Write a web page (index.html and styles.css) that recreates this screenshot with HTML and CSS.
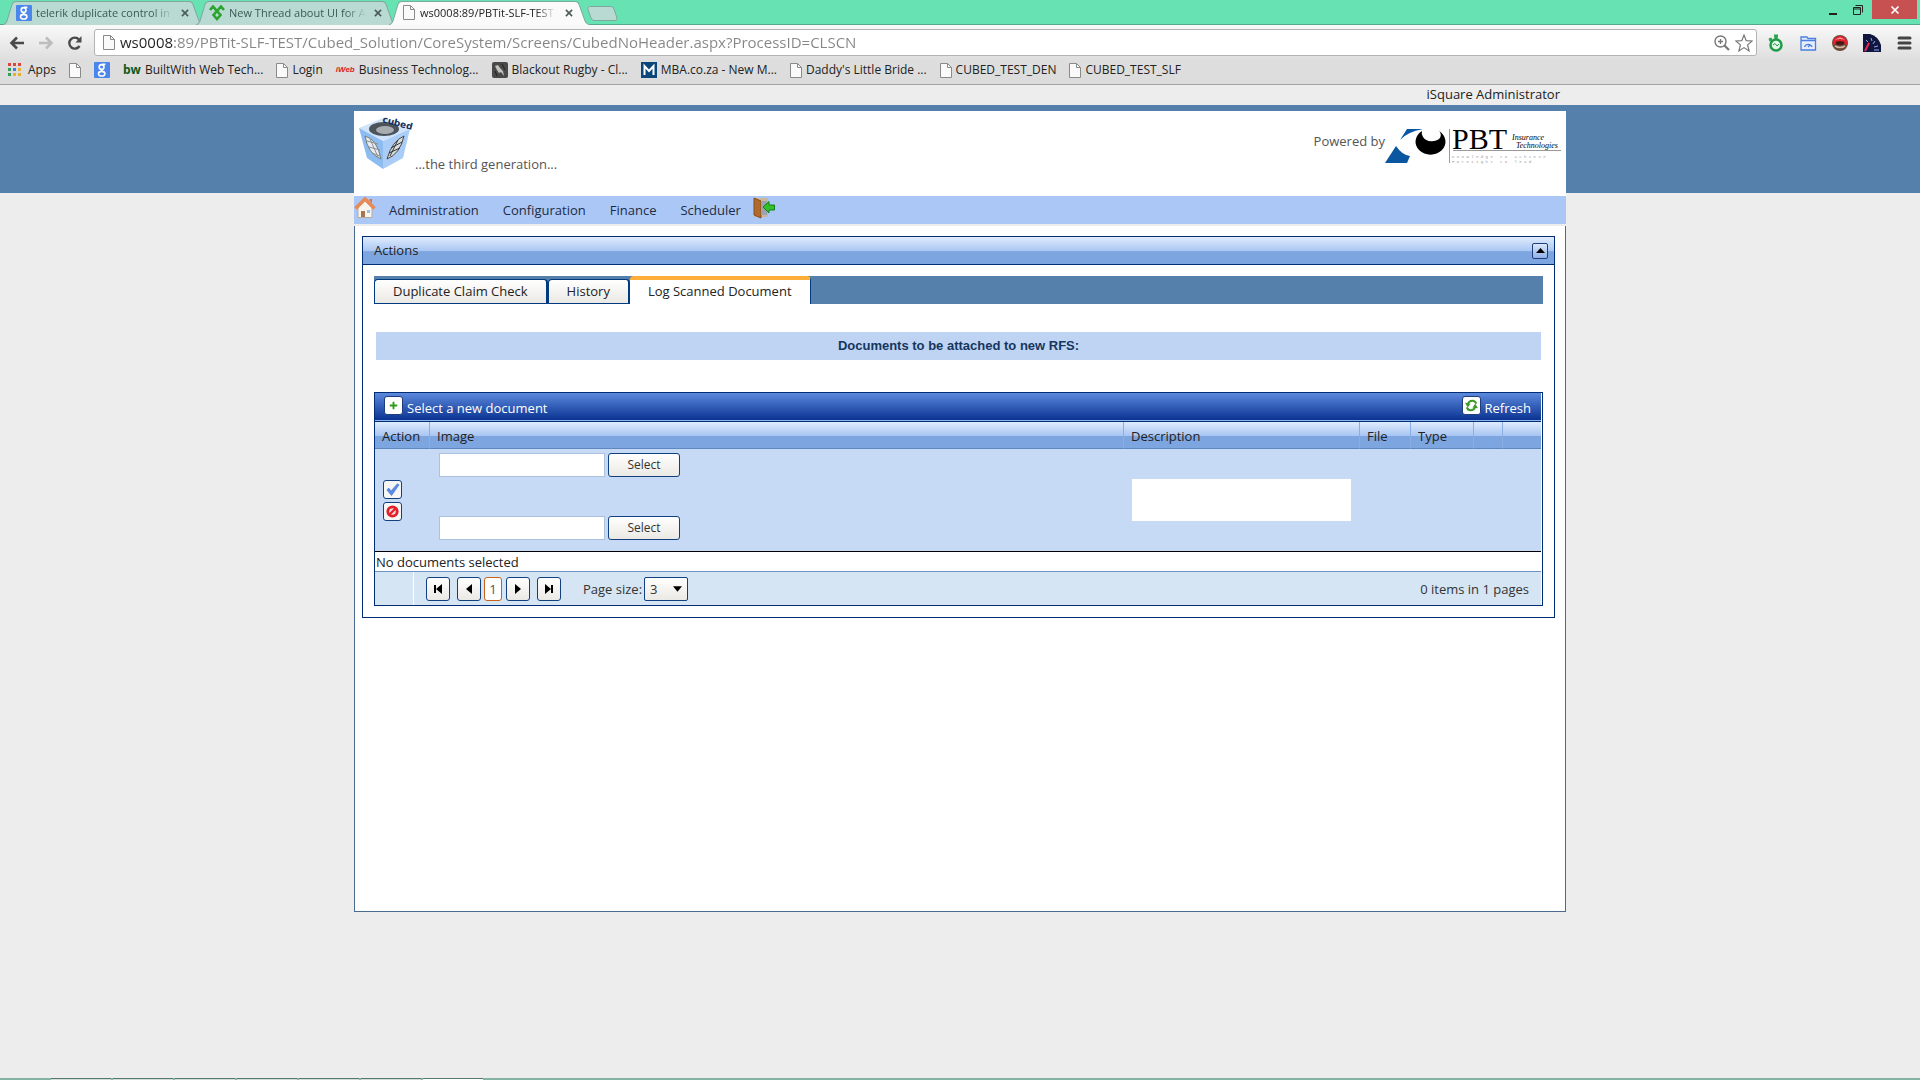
FILE: index.html
```html
<!DOCTYPE html>
<html lang="en">
<head>
<meta charset="utf-8">
<title>Log Scanned Document</title>
<link rel="stylesheet" href="styles.css">
</head>
<body>
<svg class="defs" aria-hidden="true">
  <symbol id="page" viewBox="0 0 12 15"><path d="M.5.5h7l4 4v10H.5z" fill="#fafafa" stroke="#8a8a8a"/><path d="M7.5.5v4h4" fill="none" stroke="#8a8a8a"/></symbol>
  <symbol id="google" viewBox="0 0 16 16"><rect width="16" height="16" rx="1" fill="#4a86ec"/><g fill="none" stroke="#fff" stroke-width="1.6"><circle cx="7.6" cy="5" r="2.4"/><ellipse cx="7.7" cy="11.7" rx="3.2" ry="2.3"/><path d="M8 2.4h3.4M8 7.4q-1.500 1 .8 2"/></g></symbol>
  <symbol id="close" viewBox="0 0 9 9"><path d="M1 1l7 7M8 1L1 8" stroke="currentColor" stroke-width="1.8" fill="none"/></symbol>
</svg>

<header class="browser">
  <div class="tabstrip">
    <div class="tab tab-a"><svg class="shape" preserveAspectRatio="none" viewBox="0 0 200 24"><path d="M0 24Q3 23 4 20L9 4Q10 1.500 13 1.500H185Q188 1.500 189 4L195 20Q196 23 200 24"/></svg>
      <svg class="i16"><use href="#google"/></svg><a href="#">telerik duplicate control in</a><button class="x" aria-label="Close tab"><svg><use href="#close"/></svg></button></div>
    <div class="tab tab-b"><svg class="shape" preserveAspectRatio="none" viewBox="0 0 200 24"><path d="M0 24Q3 23 4 20L9 4Q10 1.500 13 1.500H185Q188 1.500 189 4L195 20Q196 23 200 24"/></svg>
      <svg class="i16" viewBox="0 0 16 16"><path d="M1 5l3-3.500L8 6l4-4.500L15 5M8 6l3.500 4L8 14l-3.500-4z" fill="none" stroke="#2aa42e" stroke-width="2.6"/></svg><a href="#">New Thread about UI for A</a><button class="x" aria-label="Close tab"><svg><use href="#close"/></svg></button></div>
    <div class="tab tab-c current"><svg class="shape" preserveAspectRatio="none" viewBox="0 0 200 24"><path d="M0 24Q3 23 4 20L9 4Q10 1.500 13 1.500H185Q188 1.500 189 4L195 20Q196 23 200 24"/></svg>
      <svg class="ipage"><use href="#page"/></svg><a href="#">ws0008:89/PBTit-SLF-TEST</a><button class="x" aria-label="Close tab"><svg><use href="#close"/></svg></button></div>
    <button class="newtab" aria-label="New tab"><svg viewBox="0 0 31 15"><path d="M2.500.5H24Q26 .5 27 3l3 9q.5 2.500-2 2.500H7Q5 14.500 4 12L.8 3Q.5.5 2.500.5z" fill="#b9d9d3" stroke="#7fa89c"/></svg></button>
    <div class="winbuttons">
      <button aria-label="Minimize"><svg viewBox="0 0 10 10"><path d="M1 8h8v2H1z" fill="#222"/></svg></button>
      <button aria-label="Restore"><svg viewBox="0 0 10 10"><path d="M.5 2.500h7v7h-7zM.5 4h7M2.500.5h7v7" fill="none" stroke="#222"/></svg></button>
      <button class="winclose" aria-label="Close"><svg viewBox="0 0 10 10"><path d="M1.500 1.500l7 7M8.500 1.500l-7 7" stroke="#fff" stroke-width="1.700"/></svg></button>
    </div>
  </div>

  <div class="toolbar">
    <div class="nav">
      <button aria-label="Back"><svg viewBox="0 0 16 14"><path d="M15 7H3M8 1.500L2.500 7 8 12.500" fill="none" stroke="#4a4a4a" stroke-width="2.600"/></svg></button>
      <button aria-label="Forward"><svg viewBox="0 0 16 14"><path d="M1 7h12M8 1.500L13.500 7 8 12.500" fill="none" stroke="#bdbdbd" stroke-width="2.600"/></svg></button>
      <button aria-label="Reload"><svg viewBox="0 0 16 14"><path d="M12.500 10A5.500 5.500 0 1 1 12 3.500" fill="none" stroke="#4a4a4a" stroke-width="2.400"/><path d="M14.500 0v6.500H8.500z" fill="#4a4a4a"/></svg></button>
    </div>
    <div class="urlbox">
      <svg class="ipage"><use href="#page"/></svg>
      <input class="url" aria-label="Address" value="ws0008:89/PBTit-SLF-TEST/Cubed_Solution/CoreSystem/Screens/CubedNoHeader.aspx?ProcessID=CLSCN">
      <svg class="i16" viewBox="0 0 16 16"><circle cx="6.500" cy="6.500" r="5.500" fill="none" stroke="#777" stroke-width="1.400"/><path d="M4 6.500h5M6.500 4v5" stroke="#777" stroke-width="1.300"/><path d="M10.500 10.500l4.500 4.500" stroke="#777" stroke-width="2.200"/></svg>
      <svg class="i18" viewBox="0 0 18 18"><path d="M9 1l2.200 5.600 6 .4-4.600 3.900 1.500 6L9 13.600 3.900 16.900l1.500-6L.8 7l6-.4z" fill="#fff" stroke="#777" stroke-width="1.200"/></svg>
    </div>
    <div class="exts">
      <svg viewBox="0 0 18 18"><path d="M2 6l3-1M7 2h4M9 2v4" stroke="#2aa651" stroke-width="3"/><circle cx="9" cy="11" r="5.500" fill="#e5f6ea" stroke="#1f9c47" stroke-width="2.500"/><path d="M6 11l2-1.500 2 2.500 2-2" stroke="#1f9c47" fill="none"/></svg>
      <svg viewBox="0 0 18 18"><path d="M2 3h6l1 1.500h7.500V16H2z" fill="#e6eefc" stroke="#4a7fe0" stroke-width="1.300"/><path d="M2 6.500h14.500M5.500 13a4 4 0 0 1 7.500 0M9 13l2-2" stroke="#4a7fe0" fill="none" stroke-width="1.300"/></svg>
      <svg viewBox="0 0 18 18"><circle cx="9" cy="9" r="8" fill="#6a4a3a"/><path d="M2 11a7.200 7.200 0 1 1 14 0q-7-4-14 0z" fill="#e8212c"/><path d="M4 6q5-5 10 0-5-2-10 0z" fill="#f7a0a4"/><ellipse cx="9" cy="9" rx="4.500" ry="2" fill="#4a1a1a"/><path d="M4 12q5 3 10 0" stroke="#d8b8a8" stroke-width="1.500" fill="none"/></svg>
      <svg viewBox="0 0 18 18"><path d="M0 0h7q8 2 11 11v7H0z" fill="#12163f"/><path d="M2 17L6 9" stroke="#f0264f" stroke-width="2"/><path d="M3 6l2 2M8 4l1 3M12 7l-2 3M15 12l-4 1M11 16h5" stroke="#8fb0ee"/></svg>
      <svg viewBox="0 0 18 18"><path d="M4 4h11M4 9h11M4 14h11" stroke="#444" stroke-width="3" stroke-linecap="round"/></svg>
    </div>
  </div>

  <nav class="bookmarks">
    <a href="#" class="bm"><svg class="apps" viewBox="0 0 14 14"><path d="M0 0h3v3H0zM5 0h3v3H5zM10 0h3v3h-3z" fill="#d9483b"/><path d="M0 5h3v3H0z" fill="#2f9e58"/><path d="M5 5h3v3H5z" fill="#3f7ee8"/><path d="M10 5h3v3h-3z" fill="#e8b12c"/><path d="M0 10h3v3H0z" fill="#2f9e58"/><path d="M5 10h3v3H5zM10 10h3v3h-3z" fill="#e8b12c"/></svg><span>Apps</span></a>
    <a href="#" class="bm" aria-label="Blank page"><svg class="ipage"><use href="#page"/></svg></a>
    <a href="#" class="bm" aria-label="Google"><svg class="i16"><use href="#google"/></svg></a>
    <a href="#" class="bm"><b class="bw">bw</b><span>BuiltWith Web Tech...</span></a>
    <a href="#" class="bm"><svg class="ipage"><use href="#page"/></svg><span>Login</span></a>
    <a href="#" class="bm"><i class="iweb">iWeb</i><span>Business Technolog...</span></a>
    <a href="#" class="bm"><svg class="i16" viewBox="0 0 16 16"><rect width="16" height="16" rx="2" fill="#4a4a48"/><path d="M3 4l3-1 2 3 3 3 1 5-3-4-2 1-2-3z" fill="#c4c4c0"/><path d="M10 2l3 6M3 9l2 5" stroke="#222"/></svg><span>Blackout Rugby - Cl...</span></a>
    <a href="#" class="bm"><svg class="i16" viewBox="0 0 16 16"><rect width="16" height="16" fill="#0a4679"/><path d="M3.500 13V4L8 9l4.500-5v9" fill="none" stroke="#fff" stroke-width="2"/></svg><span>MBA.co.za - New M...</span></a>
    <a href="#" class="bm"><svg class="ipage"><use href="#page"/></svg><span>Daddy's Little Bride ...</span></a>
    <a href="#" class="bm"><svg class="ipage"><use href="#page"/></svg><span>CUBED_TEST_DEN</span></a>
    <a href="#" class="bm"><svg class="ipage"><use href="#page"/></svg><span>CUBED_TEST_SLF</span></a>
  </nav>
</header>

<div class="userbar wrap"><span>iSquare Administrator</span></div>

<div class="band">
  <div class="masthead wrap">
    <svg class="cube" viewBox="0 0 54 58">
      <path d="M1 14L25 4l27 11-27 12z" fill="#cfe3fb"/><path d="M1 14l24 13v28L9 44z" fill="#8dbcf0"/><path d="M52 15L25 27v28l20-11z" fill="#a9cdf6"/>
      <ellipse cx="26" cy="15" rx="15" ry="7" fill="#4c5359"/><ellipse cx="27" cy="16" rx="9" ry="4" fill="#a8adb2"/>
      <path d="M7 22q12 3 16 23-13-5-16-23z" fill="#e9edf0" stroke="#777"/><path d="M9 27l11 3M11 33l11 3M14 39l8 3M12 25l8 18" stroke="#8a8f94" fill="none"/>
      <path d="M46 22q-12 5-17 23 13-5 17-23z" fill="#d9dee2" stroke="#444"/><path d="M44 28l-11 6M42 34l-11 5M40 26l-8 16" stroke="#333" fill="none"/>
      <text x="24" y="8" class="cubetext" transform="rotate(15 24 8)">cubed</text>
    </svg>
    <span class="tagline">...the third generation...</span>
    <span class="powered">Powered by</span>
    <svg class="pbt" viewBox="0 0 178 38">
      <path d="M22 2h16Q22 5 15 13z" fill="#0a56a0"/><path d="M11 19q6 9 14 10l-3 7H0z" fill="#0a56a0"/>
      <path d="M37 4a15 13 0 1 0 17 0q3 3 1 7a10 8 0 0 1-17-1q-2-3-1-6z" fill="#000"/>
      <path d="M64.500 2v34" stroke="#999"/><path d="M68 23.500h108" stroke="#999"/>
      <text x="67" y="22" class="pbt-name">PBT</text>
      <text x="127" y="13" class="pbt-sub">Insurance</text><text x="131" y="21" class="pbt-sub">Technologies</text>
      <text x="67" y="31" class="pbt-tiny">K n o w l e d g e &#160; t o &#160; a c h i e v e</text><text x="67" y="36" class="pbt-tiny">F o r e s i g h t &#160; t o &#160; l e a d</text>
    </svg>
  </div>
</div>

<main class="wrap sheet">
  <nav class="menu">
    <a href="#" class="home" aria-label="Home"><svg viewBox="0 0 22 22"><path d="M4 11v9.500h14V11l-7-7z" fill="#f8f4ee" stroke="#b9a99a"/><path d="M1.500 11.500L11 2l9.500 9.500" fill="none" stroke="#e88a58" stroke-width="3.500"/><path d="M15.500 2h2.500v4l-2.500-2.500z" fill="#e2733a"/><path d="M7 14h4v6H7z" fill="#a5764f"/><path d="M13 13h3v3h-3z" fill="#9fc0e6"/></svg></a>
    <a href="#">Administration</a><a href="#">Configuration</a><a href="#">Finance</a><a href="#">Scheduler</a>
    <a href="#" class="exit" aria-label="Log out"><svg viewBox="0 0 22 22"><path d="M1 1h14v19H1z" fill="#c9b79c"/><path d="M1 1l7 3v17l-7-3z" fill="#b06a2c" stroke="#8a4c18"/><path d="M8 4h6v14H8z" fill="#9aa3ae"/><path d="M10 10l6-5.500V8h5.500v5H16v3z" fill="#34c02a" stroke="#13801a"/></svg></a>
  </nav>

  <section class="panel">
    <header class="panel-head"><h1>Actions</h1><button class="collapse" aria-label="Collapse"><svg viewBox="0 0 9 5"><path d="M0 5l4.500-5L9 5z"/></svg></button></header>
    <div class="panel-body">
      <div class="tabs" role="tablist">
        <button role="tab">Duplicate Claim Check</button><button role="tab">History</button><button role="tab" class="active" aria-selected="true">Log Scanned Document</button>
      </div>
      <h2 class="notice">Documents to be attached to new RFS:</h2>

      <div class="grid">
        <div class="cmdbar">
          <button class="cmd"><span class="ic"><svg viewBox="0 0 16 16"><path d="M8 4v8M4 8h8" stroke="#2f9a1c" stroke-width="2"/></svg></span><span>Select a new document</span></button>
          <button class="cmd"><span class="ic"><svg viewBox="0 0 16 16"><path d="M4 7q1-4 5-4 3 0 4 3M12 9q-1 4-5 4-3 0-4-3" fill="none" stroke="#3f9a2a" stroke-width="2.200"/><path d="M1 5l3 5 3-4zM15 11l-3-5-3 4z" fill="#3f9a2a"/></svg></span><span>Refresh</span></button>
        </div>
        <table>
          <colgroup><col class="c-action"><col><col class="c-desc"><col class="c-file"><col class="c-type"><col class="c-e1"><col class="c-e2"></colgroup>
          <thead><tr><th>Action</th><th>Image</th><th>Description</th><th>File</th><th>Type</th><th></th><th></th></tr></thead>
          <tbody>
            <tr class="edit">
              <td><div class="acts"><button class="sq" aria-label="Insert"><svg viewBox="0 0 16 16"><path d="M2 8.500l2-2 2.500 3L13 2l2 1-8 11.500z" fill="#5b8be8" stroke="#3b68cc" stroke-width=".6"/></svg></button><button class="sq" aria-label="Cancel"><svg viewBox="0 0 16 16"><circle cx="8" cy="8" r="5" fill="#fbdada" stroke="#e2202a" stroke-width="3"/><path d="M4.500 11.500l7-7" stroke="#e2202a" stroke-width="2.400"/></svg></button></div></td>
              <td><div class="files"><div class="file"><input type="text" aria-label="First image"><button>Select</button></div><div class="file"><input type="text" aria-label="Second image"><button>Select</button></div></div></td>
              <td><textarea aria-label="Description"></textarea></td><td></td><td></td><td></td><td></td>
            </tr>
            <tr class="empty"><td colspan="7">No documents selected</td></tr>
          </tbody>
        </table>
        <div class="pager">
          <button class="pg" aria-label="First page"><svg viewBox="0 0 10 10"><path d="M1 1h2v8H1zM9 0v10L3 5z"/></svg></button>
          <button class="pg" aria-label="Previous page"><svg viewBox="0 0 10 10"><path d="M8 0v10L2 5z"/></svg></button>
          <a href="#" class="num">1</a>
          <button class="pg" aria-label="Next page"><svg viewBox="0 0 10 10"><path d="M2 0v10l6-5z"/></svg></button>
          <button class="pg" aria-label="Last page"><svg viewBox="0 0 10 10"><path d="M7 1h2v8H7zM1 0v10l6-5z"/></svg></button>
          <label for="size">Page size:</label>
          <span class="pick"><select id="size"><option>3</option><option>5</option></select><svg viewBox="0 0 8 5"><path d="M0 0h8L4 5z"/></svg></span>
          <span class="count">0 items in 1 pages</span>
        </div>
      </div>
    </div>
  </section>
</main>

<footer class="taskbar"><i></i><i></i><i></i><i></i><i></i><i></i><i class="on"></i></footer>
</body>
</html>
```
FILE: styles.css
```css
* { box-sizing: border-box; }
body {
  margin: 0;
  min-height: 100vh;
  display: flex;
  flex-direction: column;
  background: #ededed;
  color: #222;
  font: 13px/18px "Open Sans", "Noto Sans", sans-serif;
}
a { color: inherit; text-decoration: none; }
button, input, select, textarea { font: inherit; color: inherit; margin: 0; }
button { border: 0; padding: 0; background: none; }
svg { display: block; flex: none; }
h1, h2 { margin: 0; font-size: 13px; font-weight: 400; }
.defs { position: absolute; width: 0; height: 0; }
.wrap { width: 100%; max-width: 1212px; margin: 0 auto; }
.i16 { width: 16px; height: 16px; }
.i18 { width: 18px; height: 18px; }
.ipage { width: 12px; height: 15px; }

/* Browser frame */
.browser { font-size: 12px; background: linear-gradient(#fafafa 24px, #dedede 60px, #dcdcdc); border-bottom: 1px solid #a3a3a3; }
.tabstrip { display: flex; height: 25px; background: #67e3b3; border-bottom: 1px solid #57a888; padding-left: 3px; font-size: 11px; }
.tab { position: relative; width: 201px; height: 25px; margin-right: -8px; padding: 0 11px 0 13px; display: flex; align-items: center; gap: 4px; color: #3c5a55; }
.tab-c { gap: 5px; padding: 0 13px 0 14px; }
.shape { position: absolute; left: 0; top: 0; width: 100%; height: 25px; fill: #b9d9d3; stroke: #7fa89c; }
.tab > :not(.shape) { position: relative; }
.tab a { flex: 1; min-width: 0; white-space: nowrap; -webkit-mask-image: linear-gradient(to right, #000 85%, transparent); mask-image: linear-gradient(to right, #000 85%, transparent); }
.current { color: #222; z-index: 1; }
.current .shape { fill: #fafafa; }
.x { width: 8px; margin: 0 4px; color: #4d5c59; }
.x svg { width: 8px; height: 8px; }
.newtab { align-self: flex-start; margin: 6px 0 0 5px; }
.newtab svg { width: 31px; height: 15px; }
.winbuttons { margin-left: auto; margin-right: 3px; display: flex; align-items: flex-start; }
.winbuttons button { width: 25px; height: 19px; display: flex; align-items: center; justify-content: center; }
.winbuttons svg { width: 10px; height: 10px; }
.winbuttons .winclose { width: 45px; background: #c75050; margin-left: 2px; }
.toolbar { display: flex; align-items: center; height: 35px; padding: 0 7px 0 9px; gap: 10px; }
.nav { display: flex; gap: 13px; width: 75px; }
.nav svg { width: 16px; height: 14px; }
.urlbox { flex: 1; height: 27px; display: flex; align-items: center; gap: 5px; padding: 0 3px 0 8px; background: #fff; border: 1px solid #b3b3b3; border-radius: 3px; }
.url { flex: 1; min-width: 0; border: 0; padding: 0 0 1px; height: 24px; font-size: 15px; color: transparent; background: linear-gradient(to right, #222 54px, #858585 54px); -webkit-background-clip: text; background-clip: text; }
.exts { display: flex; gap: 14px; }
.exts svg { width: 18px; height: 18px; }
.bookmarks { display: flex; align-items: center; height: 24px; padding: 0 0 4px 8px; gap: 13px; }
.bm { display: flex; align-items: center; gap: 4px; white-space: nowrap; }
.apps { width: 14px; height: 14px; margin-right: 2px; }
.bw { color: #0d5a1c; font-size: 12px; }
.iweb { color: #e02020; font: italic bold 8px/12px "Liberation Sans", sans-serif; }

/* Site header */
.userbar { display: flex; justify-content: flex-end; height: 20px; padding-right: 6px; }
.band { height: 88px; background: #5480ab; padding-top: 6px; }
.masthead { height: 85px; background: #fff; display: flex; padding: 3px 3px 0 4px; }
.cube { width: 54px; height: 58px; overflow: visible; }
.tagline { margin: 41px auto 0 3px; color: #555; }
.powered { margin: 18px 0 0; color: #555; }
.pbt { width: 178px; height: 38px; margin-top: 13px; overflow: visible; }
.cubetext { font: bold 9px "DejaVu Sans", sans-serif; fill: #16305c; }
.pbt-name { font: 30px "Liberation Serif", serif; }
.pbt-sub { font: italic 8px "Liberation Serif", serif; }
.pbt-tiny { font: 4px "Liberation Mono", monospace; fill: #999; }

.sheet { min-height: 716px; margin-top: 3px; padding: 0 10px 12px 7px; border: 1px solid #4b6a90; border-top: 0; background: #fff; }
.menu { display: flex; align-items: center; height: 28px; margin: 0 -11px 12px -8px; background: #abc7f6; box-shadow: 0 2px 0 #ededed; }
.menu a { padding: 0 12px; color: #1c2c44; }
.menu .home { padding: 0 1px 4px 0; }
.menu .exit { padding: 0 0 4px; }
.menu svg { width: 22px; height: 22px; }

/* Actions panel */
.panel { border: 1px solid #002d75; }
.panel-head { display: flex; align-items: center; justify-content: space-between; height: 28px; padding: 0 6px 0 11px; border-bottom: 1px solid #002d75; background: linear-gradient(#dfecfd, #a9c6f2 52%, #7da5e0 54%, #7da5e0); }
.panel-head h1 { padding-bottom: 2px; }
.collapse { width: 16px; height: 16px; display: flex; align-items: center; justify-content: center; border: 1px solid #1f3c7c; border-radius: 2px; background: linear-gradient(#dce8fb, #8fb0e6); }
.collapse svg { width: 9px; height: 5px; }
.panel-body { padding: 11px; }
.tabs { display: flex; height: 28px; background: #5480ab; }
.tabs button { margin-top: 3px; padding: 0 18px 2px; border: 1px solid #003a80; border-right-width: 2px; border-radius: 4px 4px 0 0; background: linear-gradient(#fff, #ebe9e4); color: #222; }
.tabs .active { margin-top: 0; padding-bottom: 3px; border-top: 4px solid #ffae3a; border-bottom: 0; border-left: 0; border-right-width: 1px; background: #fff; }
.notice { margin: 28px 2px 32px; height: 28px; background: #bfd3f2; color: #14375f; text-align: center; font: bold 13px/28px "Liberation Sans", Arial, sans-serif; }
.grid { border: 1px solid #002d75; padding-right: 1px; }
.cmdbar { display: flex; justify-content: space-between; height: 29px; padding: 3px 10px 0 9px; background: linear-gradient(#5b89dc, #0b3493 92%, #8fb5ee 93%, #8fb5ee 97%, #002d75 97%); }
.cmd { display: flex; height: 20px; gap: 4px; color: #fff; }
.cmd > span:last-child { padding-top: 3px; }
.ic { width: 19px; height: 19px; padding: 1px; background: #fff; border: 1px solid #1f3c7c; border-radius: 3px; }
.ic svg, .sq svg { width: 15px; height: 15px; margin: auto; }
table { width: 100%; border-collapse: separate; border-spacing: 0; table-layout: fixed; }
.c-action { width: 54px; }
.c-desc { width: 236px; }
.c-file { width: 51px; }
.c-type { width: 63px; }
.c-e1 { width: 29px; }
.c-e2 { width: 39px; }
th { height: 27px; padding: 2px 0 0 7px; text-align: left; font-weight: 400; border-left: 1px solid #8aaee4; border-bottom: 1px solid #5f87bf; background: linear-gradient(#dfecfd, #a9c6f2 52%, #7da5e0 54%, #7da5e0); }
th:first-child { border-left: 0; }
td { padding: 0; }
.edit td { height: 103px; background: #c6daf5; border-bottom: 1px solid #000; }
.acts { display: flex; flex-direction: column; gap: 3px; padding-left: 8px; }
.sq { width: 19px; height: 19px; border: 1px solid #12407f; border-radius: 3px; background: #f6f6f6; }
.files { display: flex; flex-direction: column; gap: 39px; padding: 0 0 8px 10px; }
.file { display: flex; gap: 3px; }
.file input { width: 166px; height: 24px; border: 1px solid #abc1de; background: #fff; }
.file button { width: 72px; height: 24px; border: 1px solid #12407f; border-radius: 3px; background: linear-gradient(#fff, #ebe9e4); font-size: 12px; color: #333; }
.edit textarea { display: block; width: 219px; height: 42px; margin-left: 9px; border: 0; resize: none; background: #fff; }
.empty td { height: 20px; padding: 1px 0 0 1px; background: #fff; border-bottom: 1px solid #6d93c5; }
.pager { display: flex; align-items: center; height: 33px; padding: 0 12px 0 51px; background: linear-gradient(to right, #d6e5f3 38px, #fff 38px, #fff 39px, #d6e5f3 39px); color: #333; }
.pg { width: 24px; height: 24px; margin-right: 7px; display: flex; align-items: center; justify-content: center; border: 1px solid #12407f; border-radius: 3px; background: linear-gradient(#fff, #ebe9e4); }
.pg svg { width: 10px; height: 10px; }
.num { width: 18px; height: 24px; margin: 0 4px 0 -4px; text-align: center; line-height: 22px; border: 1px solid #c8621a; border-radius: 3px; background: #fff; color: #555; }
.pager label { margin: 0 2px 0 15px; }
.pick { position: relative; }
.pick select { display: block; width: 44px; height: 24px; padding: 0 5px; appearance: none; border: 1px solid #12407f; border-radius: 2px; background: linear-gradient(#fff, #ebe9e4); }
.pick svg { position: absolute; right: 6px; top: 9px; width: 9px; height: 6px; pointer-events: none; }
.count { margin-left: auto; }

.taskbar { display: flex; gap: 2px; height: 2px; margin-top: auto; padding-left: 51px; background: #85b3a2; }
.taskbar i { width: 60px; background: #d5ddd9; border-top: 1px solid #567a6c; }
.taskbar .on { background: #fff; }
```
